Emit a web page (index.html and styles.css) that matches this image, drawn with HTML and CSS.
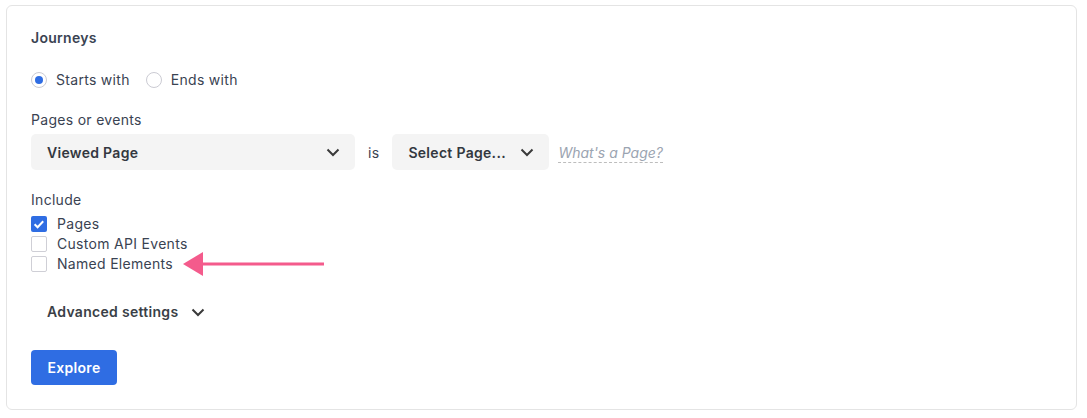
FILE: index.html
```
<!DOCTYPE html>
<html>
<head>
<meta charset="utf-8">
<link rel="stylesheet" href="styles.css">
</head>
<body>
<div class="card">
  <div class="title">Journeys</div>
  <div class="radios">
    <label class="radio"><span class="dot checked"></span>Starts with</label>
    <label class="radio"><span class="dot"></span>Ends with</label>
  </div>
  <div class="label">Pages or events</div>
  <div class="select-row">
    <div class="select wide"><span>Viewed Page</span>
      <svg class="chev" width="16" height="16" viewBox="0 0 16 16"><path d="M2.5 5.5l5.5 5.5 5.5-5.5" fill="none" stroke="#3a3a3a" stroke-width="2"/></svg>
    </div>
    <span class="is">is</span>
    <div class="select narrow"><span>Select Page...</span>
      <svg class="chev" width="16" height="16" viewBox="0 0 16 16"><path d="M2.5 5.5l5.5 5.5 5.5-5.5" fill="none" stroke="#3a3a3a" stroke-width="2"/></svg>
    </div>
    <span class="help">What's a Page?</span>
  </div>
  <div class="label include">Include</div>
  <div class="checks">
    <label class="check"><span class="box checked"><svg width="16" height="16" viewBox="0 0 16 16"><path d="M3.6 8.2l3 3 5.6-6" fill="none" stroke="#fff" stroke-width="2"/></svg></span>Pages</label>
    <label class="check"><span class="box"></span>Custom API Events</label>
    <label class="check"><span class="box"></span>Named Elements
      <svg class="arrow" width="142" height="26" viewBox="0 0 142 26"><path d="M19 11.5H141v3H19z" fill="#f45b8c"/><path d="M0 13L20 1v24z" fill="#f45b8c"/></svg>
    </label>
  </div>
  <div class="advanced">Advanced settings
    <svg class="chev" width="16" height="16" viewBox="0 0 16 16"><path d="M2.5 5.5l5.5 5.5 5.5-5.5" fill="none" stroke="#3a3a3a" stroke-width="2"/></svg>
  </div>
  <button class="explore">Explore</button>
</div>
</body>
</html>
```
FILE: styles.css
```
* { box-sizing: border-box; }
body {
  margin: 0;
  background: #fff;
  font-family: Inter, "Noto Sans", sans-serif;
  font-size: 14px;
  letter-spacing: 0.3px;
  color: #3a4352;
}
.card {
  margin: 5px 0 0 6px;
  width: 1071px;
  height: 405px;
  border: 1px solid #e4e4e4;
  border-radius: 6px;
  padding: 22px 24px;
}
.title {
  font-weight: 600;
  line-height: 20px;
  color: #3a4352;
}
.radios {
  display: flex;
  gap: 16px;
  margin-top: 22px;
  height: 20px;
  align-items: center;
}
.radio {
  display: flex;
  align-items: center;
  gap: 9px;
  line-height: 20px;
}
.dot {
  width: 16px;
  height: 16px;
  border-radius: 50%;
  border: 1.5px solid #cbcbd3;
  display: flex;
  align-items: center;
  justify-content: center;
}
.dot.checked::after {
  content: "";
  width: 8px;
  height: 8px;
  border-radius: 50%;
  background: #2f6de3;
}
.label {
  margin-top: 20px;
  line-height: 20px;
}
.select-row {
  display: flex;
  align-items: center;
  margin-top: 4px;
  height: 36px;
}
.select {
  height: 36px;
  background: #f4f4f4;
  border-radius: 5px;
  display: flex;
  align-items: center;
  justify-content: space-between;
  padding: 0 14px 0 16px;
  font-weight: 600;
  color: #333840;
}
.select.wide { width: 324px; }
.select.narrow { width: 157px; }
.is { margin: 0 13px; color: #3a4352; }
.help {
  margin-left: 9px;
  font-style: italic;
  letter-spacing: 0;
  color: #9ba4b1;
  line-height: 18px;
  border-bottom: 1.5px dashed #bdbdbd;
  margin-top: 2px;
}
.include { margin-top: 20px; }
.checks { margin-top: 4px; }
.check {
  display: flex;
  align-items: center;
  gap: 10px;
  height: 20px;
  line-height: 20px;
}
.box {
  width: 16px;
  height: 16px;
  border: 1.5px solid #cfcfd6;
  border-radius: 2px;
  display: flex;
  align-items: center;
  justify-content: center;
}
.box.checked {
  background: #2f6de3;
  border: none;
}
.advanced {
  margin-top: 28px;
  margin-left: 16px;
  font-weight: 600;
  line-height: 20px;
  display: flex;
  align-items: center;
  gap: 12px;
  color: #3a3f47;
}
.explore {
  display: block;
  margin-top: 28px;
  width: 86px;
  height: 35px;
  background: #2f6de3;
  color: #fff;
  border: none;
  border-radius: 4px;
  font-family: inherit;
  font-size: 14px;
  letter-spacing: 0.3px;
  font-weight: 600;
}
```
